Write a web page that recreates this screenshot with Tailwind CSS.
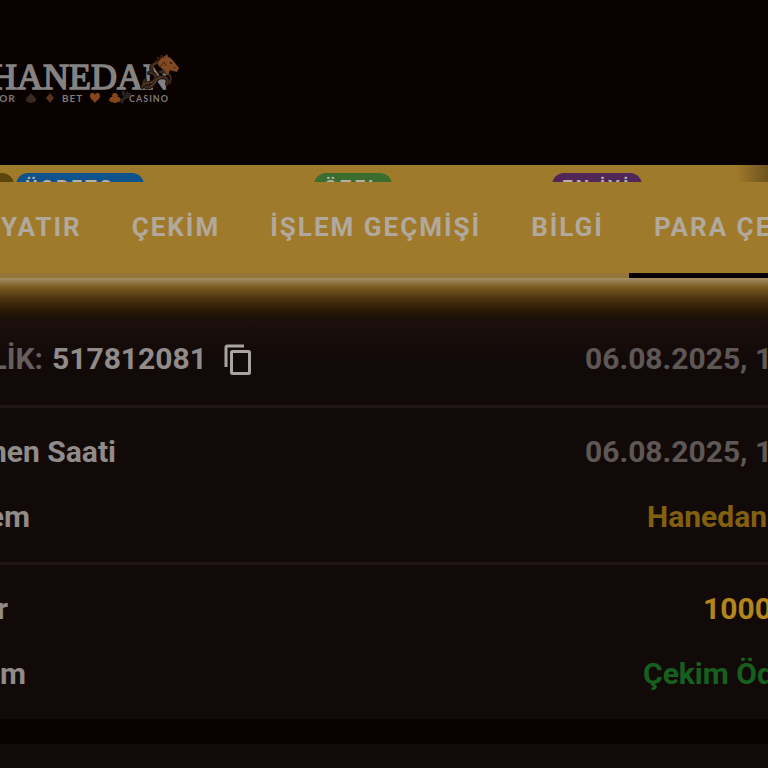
<!DOCTYPE html>
<html lang="tr">
<head>
  <meta charset="UTF-8" />
  <meta name="viewport" content="width=device-width, initial-scale=1" />
  <title>Hanedan Casino</title>
  <script src="https://cdn.jsdelivr.net/npm/@tailwindcss/browser@4"></script>
</head>
<body class="bg-[#090000] font-[Roboto,sans-serif] overflow-x-hidden">
  <header class="h-[165px] pt-12">
    <a href="#" aria-label="Hanedan" class="block w-[190px]">
      <svg width="190" height="64" viewBox="0 48 190 64">
        <text x="169" y="89" text-anchor="end" font-family="Liberation Serif, serif" font-size="36" fill="#858282" stroke="#858282" stroke-width="1.500">HANEDAN</text>
        <g font-family="Lato, sans-serif" font-weight="700" letter-spacing="1" fill="#807b7a">
          <text x="-8" y="102" font-size="10">POR</text>
          <text x="62" y="102" font-size="10">BET</text>
          <text x="129" y="102" font-size="9">CASINO</text>
        </g>
        <path d="M31 93c-2 3-5 4-5 7 0 2 3 3 4 1l-1 2h4l-1-2c1 2 4 1 4-1 0-3-3-4-5-7z" fill="#3c2a20" />
        <path d="M50 93l4 5-4 5-4-5z" fill="#593421" />
        <path d="M95 103c-2-3-5-4-5-7 0-4 4-4 5-1 1-3 5-3 5 1 0 3-3 4-5 7z" fill="#86451b" />
        <path d="M115 93a2.700 2.700 0 0 1 2.600 4 2.600 2.600 0 1 1-1.600 4l1 2h-4l1-2a2.600 2.600 0 1 1-1.600-4 2.700 2.700 0 0 1 2.600-4z" fill="#86451b" />
        <g fill="none" stroke-linecap="round">
          <path d="M122 102c0-6 7-3 5-9M124 95l-1-3M127 97l3-3" stroke="#282321" stroke-width="3" />
          <path d="M142 87c2-6 8-2 12-6 4-4 0-9-5-8M145 80c-3 4 0 9 5 7 6-3 5-9 11-10 6 0 8 3 6 7M152 71c-4-7 6-10 12-7 5 3 1 8-4 8" stroke="#1c120d" stroke-width="4" />
          <path d="M142 87c2-6 8-2 12-6 4-4 0-9-5-8M145 80c-3 4 0 9 5 7 6-3 5-9 11-10 6 0 8 3 6 7M152 71c-4-7 6-10 12-7 5 3 1 8-4 8M165 73c6 1 7 5 5 10" stroke="#3f2a1c" stroke-width="2" />
          <path d="M143 85c2-4 8 0 11-5M151 86c6-3 5-8 10-9M153 68c0-5 6-6 10-4" stroke="#6e482b" stroke-width="1" stroke-dasharray="2 2" />
        </g>
        <path d="M158 64c1-4 2-6 5-7l2-1 2-2 1 3c4 1 5 4 7 6l4 5-2 4-4-1-3-1c-1 2-1 4-3 5l-2-4c-2-3-5-2-7-7z" fill="#7e4922" />
        <path d="M158 63l-3-2 4 0-2-4 4 2 0-4 3 3M160 67l4-5 2 4M174 67l2 1" fill="none" stroke="#432615" stroke-width="1" />
        <circle cx="171" cy="63" r="1" fill="#21130c" />
      </svg>
    </a>
  </header>

  <nav class="bg-[#a07a2b]">
    <!-- labels over the tabs, cut off by the row below -->
    <div class="flex h-[17px] overflow-hidden text-[19px] leading-[28px] font-bold tracking-[3px] text-[#b3b0a9]">
      <span class="mt-2 h-6 w-3.5 rounded-tr-xl bg-[#5d450e]"></span>
      <span class="mt-2 ml-0.5 h-6 w-32 rounded-t-xl bg-[#0e538b] pl-[9px]">ÜCRETS</span>
      <span class="mt-2 ml-[170px] h-6 w-[78px] rounded-t-xl bg-[#3b6d2e] pl-2.5">ÖZEL</span>
      <span class="mt-2 ml-40 h-6 w-[90px] rounded-t-xl bg-[#512759] pl-2.5">EN İYİ</span>
      <span class="ml-auto h-[17px] w-8 bg-linear-to-r from-[#a07a2b] to-[#6e531e]"></span>
    </div>
    <div class="flex overflow-hidden text-[26px] leading-[91px] font-bold tracking-[2px] whitespace-nowrap text-[#b2a99e]">
      <a href="#" class="shrink-0 border-b-[5px] border-[#967638] pl-px pr-[25px]">YATIR</a>
      <a href="#" class="shrink-0 border-b-[5px] border-[#967638] px-[25px]">ÇEKİM</a>
      <a href="#" class="shrink-0 border-b-[5px] border-[#967638] px-[25px]">İŞLEM GEÇMİŞİ</a>
      <a href="#" class="shrink-0 border-b-[5px] border-[#967638] px-[25px]">BİLGİ</a>
      <a href="#" aria-current="page" class="shrink-0 border-b-[5px] border-[#090000] px-[25px]">PARA ÇE</a>
    </div>
  </nav>

  <main class="text-[30px] leading-[65px] font-bold whitespace-nowrap text-[#918b89]">
    <article class="bg-[#120a09]">
      <div class="flex items-center justify-between bg-[linear-gradient(#a48f65,#7b5b21_9px,#4a3210_21px,#281806_33px,#1d1208_40px,#1a0f0c_44px,#120a09_80px)] pt-12 pb-3.5">
        <div class="flex items-center">
          <span class="flex w-[43px] justify-end overflow-hidden text-[#665e5c]">LİK:</span>
          <span class="ml-[9px]">517812081</span>
          <button type="button" aria-label="Kopyala" class="ml-[17px]">
            <svg width="28" height="32" viewBox="0 0 28 32" fill="none" stroke="#aaa4a1" stroke-width="3">
              <path d="M2 24V4.500Q2 3 3.500 3H20" />
              <rect x="7.500" y="8.500" width="18" height="22" rx="1" />
            </svg>
          </button>
        </div>
        <span class="w-[183px] overflow-hidden text-[#5f5755]">06.08.2025, 14</span>
      </div>

      <div class="border-t-[3px] border-[#201615] pt-[11px] pb-[13px]">
        <div class="flex justify-between">
          <span class="flex w-[116px] justify-end overflow-hidden">nen Saati</span>
          <span class="w-[183px] overflow-hidden text-[#5f5755]">06.08.2025, 14</span>
        </div>
        <div class="flex justify-between">
          <span class="flex w-[30px] justify-end overflow-hidden">em</span>
          <span class="w-[121px] overflow-hidden text-[#82600f]">Hanedan</span>
        </div>
      </div>

      <div class="border-t-[3px] border-[#201615] pt-[11px] pb-[13px]">
        <div class="flex justify-between">
          <span class="flex w-2 justify-end overflow-hidden">r</span>
          <span class="w-[65px] overflow-hidden text-[#b3851b]">1000</span>
        </div>
        <div class="flex justify-between">
          <span class="flex w-[26px] justify-end overflow-hidden">m</span>
          <span class="w-[125px] overflow-hidden text-[#16601f]">Çekim Öd</span>
        </div>
      </div>
    </article>

    <article class="mt-[25px] h-6 bg-[#120a09]"></article>
  </main>
</body>
</html>
